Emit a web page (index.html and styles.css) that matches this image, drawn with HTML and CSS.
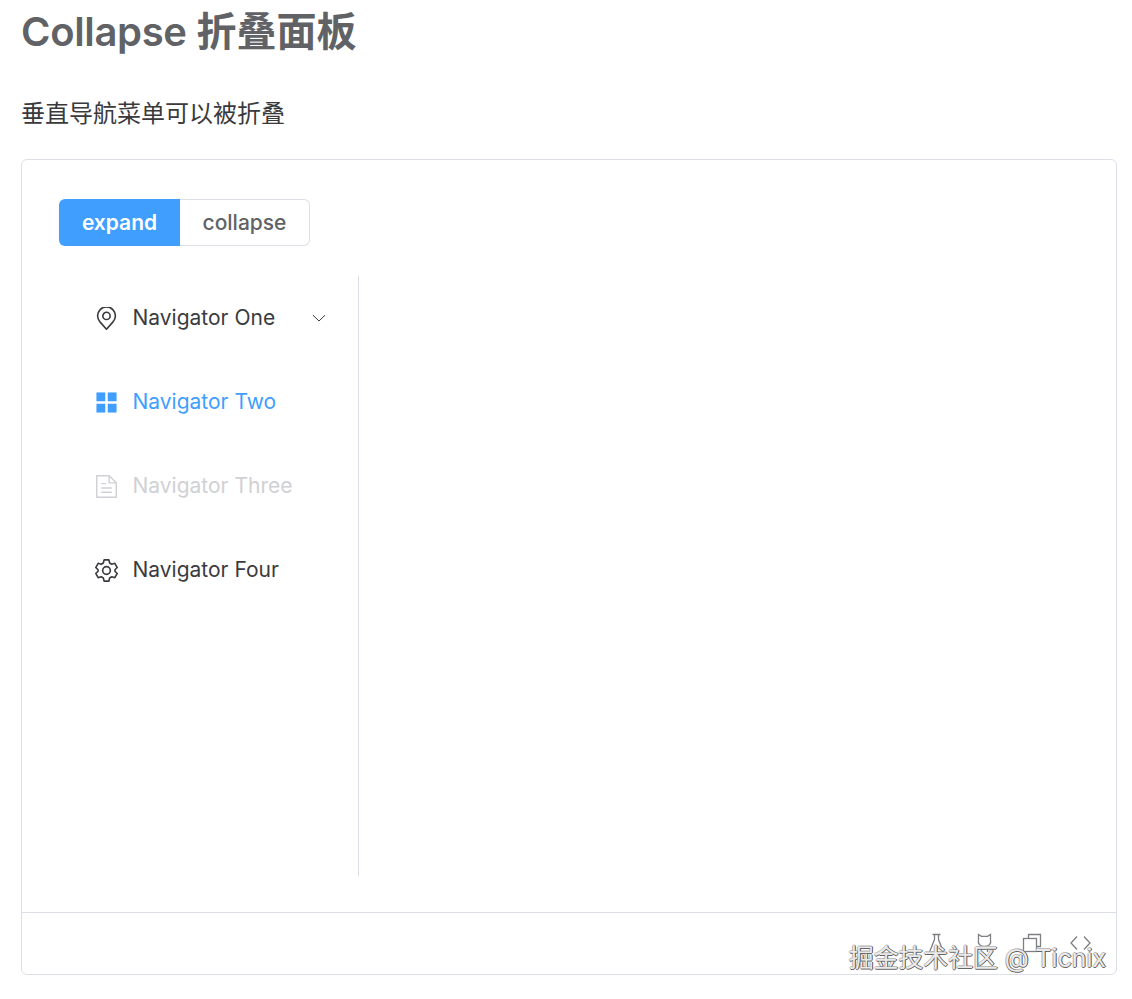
FILE: index.html
```html
<!DOCTYPE html>
<html lang="zh">
<head>
<meta charset="utf-8">
<title>Collapse 折叠面板</title>
<link rel="stylesheet" href="styles.css">
</head>
<body>
<h1 class="title"><span class="latin">Collapse </span>折叠面板</h1>
<p class="lead">垂直导航菜单可以被折叠</p>
<section class="demo">
  <div class="preview">
    <div class="segmented">
      <span class="seg seg-on">expand</span>
      <span class="seg seg-off">collapse</span>
    </div>
    <nav class="menu">
      <div class="item">
        <svg class="icon" viewBox="0 0 24 24" fill="none" stroke="currentColor" stroke-width="1.7"><path d="M12 23.200 5.400 15.800a9.300 9.300 0 1 1 13.200 0z" stroke-linejoin="round"/><circle cx="12" cy="9.300" r="3.800"/></svg>
        <span class="label">Navigator One</span>
        <svg class="chev" viewBox="0 0 16 16" fill="none" stroke="currentColor" stroke-width="1"><path d="M2 5.200 8 11l6-5.800"/></svg>
      </div>
      <div class="item item-active">
        <svg class="icon" viewBox="0 0 24 24" fill="currentColor"><rect x="1.500" y="1.500" width="9.200" height="9.200"/><rect x="13.300" y="1.500" width="9.200" height="9.200"/><rect x="1.500" y="13.300" width="9.200" height="9.200"/><rect x="13.300" y="13.300" width="9.200" height="9.200"/></svg>
        <span class="label">Navigator Two</span>
      </div>
      <div class="item item-disabled">
        <svg class="icon" viewBox="0 0 24 24" fill="none" stroke="currentColor" stroke-width="1.500"><path d="M1.800 .8h13l7.400 7.400v15H1.800z" stroke-linejoin="round"/><path d="M14.800 .8v7.400h7.400M6.500 9h5M6.500 13.500h11M6.500 18h11"/></svg>
        <span class="label">Navigator Three</span>
      </div>
      <div class="item">
        <svg class="icon" viewBox="0 0 24 24" fill="none" stroke="currentColor" stroke-width="1.700" stroke-linejoin="round"><path d="M9.500 .9h5l.8 3.300 2.200 1.300 3.200-1 2.500 4.400-2.400 2.300v1.600l2.400 2.300-2.500 4.400-3.200-1-2.200 1.300-.8 3.300h-5l-.8-3.300-2.200-1.300-3.200 1-2.500-4.400 2.400-2.300v-1.600L.8 8.900l2.500-4.400 3.200 1 2.200-1.300z"/><circle cx="12" cy="12" r="4"/></svg>
        <span class="label">Navigator Four</span>
      </div>
    </nav>
  </div>
  <footer class="tools">
    <svg class="tool" viewBox="0 0 21 21" fill="none" stroke="currentColor" stroke-width="1.300"><path d="M6.500 1.500h8M8.500 1.500v5L3.500 19h14l-5-12.500v-5"/></svg>
    <svg class="tool" viewBox="0 0 21 21" fill="none" stroke="currentColor" stroke-width="1.300"><path d="M4.500 1.500l3 1.800h6l3-1.800v5.500c1 3.500-1.500 6.500-6 6.500s-7-3-6-6.500zM7.500 13.500V19M13.500 13.500V19"/></svg>
    <svg class="tool" viewBox="0 0 21 21" fill="none" stroke="currentColor" stroke-width="1.300"><path d="M6.500 5.500v-4h12v12h-4"/><rect x="1.500" y="5.500" width="13" height="13"/></svg>
    <svg class="tool" viewBox="0 0 21 21" fill="none" stroke="currentColor" stroke-width="1.300"><path d="M7 3.500 1 10l6 6.500M14 3.500l6 6.500-6 6.500"/></svg>
  </footer>
  <div class="mark">掘金技术社区 @ Ticnix</div>
</section>
</body>
</html>
```
FILE: styles.css
```css
* { box-sizing: border-box; }
html, body { margin: 0; background: #fff; }
body {
  padding: 0 15px 0 21px;
  font-family: Inter, "Noto Sans CJK SC", sans-serif;
  color: #303133;
}
.title {
  margin: 0;
  padding-top: 8px;
  font-size: 40px;
  line-height: 48px;
  font-weight: 600;
  color: #606266;
}
.latin { letter-spacing: -0.33px; }
.lead {
  margin: 43px 0 0;
  font-size: 24px;
  line-height: 30px;
  font-weight: 400;
  color: #3a3a3c;
}
.demo {
  position: relative;
  margin-top: 30px;
  height: 816px;
  border: 1px solid #dcdfe6;
  border-radius: 6px;
}
.preview {
  height: 753px;
  padding: 39px 37px 0;
  border-bottom: 1px solid #dcdfe6;
}
.segmented { display: flex; height: 47px; width: 251px; }
.seg {
  display: flex;
  align-items: center;
  justify-content: center;
  font-size: 21px;
  font-weight: 500;
}
.seg-on {
  width: 121px;
  background: #409eff;
  color: #fff;
  font-weight: 600;
  border-radius: 6px 0 0 6px;
}
.seg-off {
  flex: 1;
  color: #606266;
  border: 1px solid #dcdfe6;
  border-left: 0;
  border-radius: 0 6px 6px 0;
}
.menu {
  margin-top: 30px;
  width: 300px;
  height: 600px;
  border-right: 1px solid #dcdfe6;
}
.item {
  display: flex;
  align-items: center;
  height: 84px;
  padding-left: 36px;
  font-size: 21px;
  color: #3a3b3e;
}
.item-active { color: #409eff; }
.item-disabled { color: #d0d1d4; }
.icon { width: 23px; height: 23px; margin-right: 14.5px; flex: none; }
.label { flex: 1; padding-bottom: 2px; }
.chev { width: 16px; height: 16px; margin-right: 31px; flex: none; }
.tools {
  display: flex;
  justify-content: flex-end;
  gap: 27px;
  padding: 20px 25px 0 0;
  color: #7d7f83;
}
.tool { width: 21px; height: 21px; flex: none; }
.mark {
  position: absolute;
  right: 10px;
  bottom: -1px;
  font-size: 24.8px;
  line-height: 34px;
  color: rgba(255,255,255,0.9);
  text-shadow: 1px 0 0 #555, 0 1px 0 #666, -1px 0 0 #bbb, 0 -1px 0 #bbb;
  white-space: nowrap;
}
```
